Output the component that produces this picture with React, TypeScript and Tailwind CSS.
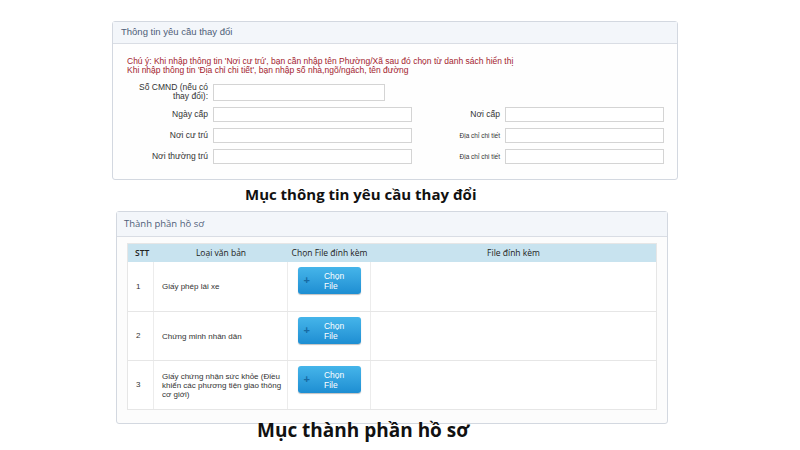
const rows = [
  { stt: "1", name: ["Giấy phép lái xe"] },
  { stt: "2", name: ["Chứng minh nhân dân"] },
  {
    stt: "3",
    name: ["Giấy chứng nhận sức khỏe (Điều", "khiển các phương tiện giao thông", "cơ giới)"],
  },
];

function Field({ w }: { w: string }) {
  return <div className={`${w} h-[15px] border border-[#d4d4d4] bg-white`} />;
}

function ChooseFile() {
  return (
    <button className="flex h-[27px] w-[63px] items-center rounded-[3px] bg-gradient-to-b from-[#45b5ea] to-[#1d8ed2] pl-[6px] text-white shadow-[0_1px_1px_rgba(0,0,0,0.25)]">
      <span className="text-[11px] font-bold leading-none text-[#176aa3]">+</span>
      <span className="ml-[14px] text-left text-[8.5px] leading-[10px]">
        Chọn
        <br />
        File
      </span>
    </button>
  );
}

export default function App() {
  return (
    <div className="h-[450px] w-[800px] overflow-hidden bg-white font-['Liberation_Sans',sans-serif]">
      <div className="pl-[112px] pt-[21px]">
        {/* Thông tin yêu cầu thay đổi */}
        <div className="h-[159px] w-[566px] rounded-[3px] border border-[#d3d8e0] bg-[#fefefe]">
          <div className="flex h-[22px] items-center border-b border-[#d9dde4] bg-[#f3f6fa] pl-[8px] text-[9.5px] text-[#4e5d78]">
            Thông tin yêu cầu thay đổi
          </div>
          <div className="pl-[14px] pt-[13px] text-[8.5px] leading-[9px] text-[#a3232e]">
            <div>Chú ý: Khi nhập thông tin 'Nơi cư trú', bạn cần nhập tên Phường/Xã sau đó chọn từ danh sách hiển thị</div>
            <div>Khi nhập thông tin 'Địa chỉ chi tiết', bạn nhập số nhà,ngõ/ngách, tên đường</div>
          </div>
          <div className="mt-[8px] flex flex-col gap-[6px] text-[8.5px] text-[#333]">
            <div className="flex items-center gap-[5px]">
              <div className="w-[95px] text-right leading-[9px]">
                Số CMND (nếu có
                <br />
                thay đổi):
              </div>
              <div className="h-[17px] w-[172px] border border-[#d4d4d4] bg-white" />
            </div>
            <div className="flex items-center gap-[5px]">
              <div className="w-[95px] text-right">Ngày cấp</div>
              <Field w="w-[199px]" />
              <div className="w-[83px] text-right">Nơi cấp</div>
              <Field w="w-[159px]" />
            </div>
            <div className="flex items-center gap-[5px]">
              <div className="w-[95px] text-right">Nơi cư trú</div>
              <Field w="w-[199px]" />
              <div className="w-[83px] text-right text-[6.5px]">Địa chỉ chi tiết</div>
              <Field w="w-[159px]" />
            </div>
            <div className="flex items-center gap-[5px]">
              <div className="w-[95px] text-right">Nơi thường trú</div>
              <Field w="w-[199px]" />
              <div className="w-[83px] text-right text-[6.5px]">Địa chỉ chi tiết</div>
              <Field w="w-[159px]" />
            </div>
          </div>
        </div>
      </div>

      <div className="mt-[4px] pl-[245px] font-['Open_Sans',sans-serif] text-[15px] font-bold leading-[20px] text-[#111]">
        Mục thông tin yêu cầu thay đổi
      </div>

      {/* Thành phần hồ sơ */}
      <div className="pl-[116px] pt-[7px]">
        <div className="h-[213px] w-[552px] rounded-[3px] border border-[#d3d8e0] bg-[#fcfcfc]">
          <div className="flex h-[25px] items-center border-b border-[#d9dde4] bg-[#f3f6fa] pl-[7px] font-['Open_Sans',sans-serif] text-[9.5px] text-[#4e5d78]">
            Thành phần hồ sơ
          </div>
          <div className="pl-[10px] pt-[6px]">
            <div className="w-[530px] border border-[#e6e6e6] bg-white text-[8px] text-[#333]">
              <div className="flex h-[18px] items-center bg-[#c8e3ef] font-['Open_Sans',sans-serif] text-[8.5px] text-[#222]">
                <div className="w-[26px] pl-[7px] font-semibold">STT</div>
                <div className="w-[134px] text-center">Loại văn bản</div>
                <div className="w-[83px] text-center">Chọn File đính kèm</div>
                <div className="flex-1 text-center">File đính kèm</div>
              </div>
              {rows.map((r, i) => (
                <div key={r.stt} className={`flex h-[49px] ${i > 0 ? "border-t border-[#e6e6e6]" : ""}`}>
                  <div className="flex w-[26px] items-center border-r border-[#ececec] pl-[8px]">{r.stt}</div>
                  <div className="flex w-[134px] flex-col justify-center border-r border-[#ececec] pl-[8px] leading-[9px]">
                    {r.name.map((l) => (
                      <div key={l} className="whitespace-nowrap">
                        {l}
                      </div>
                    ))}
                  </div>
                  <div className="flex w-[83px] items-start justify-center border-r border-[#ececec] pt-[5px]">
                    <ChooseFile />
                  </div>
                  <div className="flex-1" />
                </div>
              ))}
            </div>
          </div>
        </div>
      </div>

      <div className="mt-[-6px] pl-[257px] font-['Open_Sans',sans-serif] text-[19px] font-bold leading-[24px] text-[#111]">
        Mục thành phần hồ sơ
      </div>
    </div>
  );
}
